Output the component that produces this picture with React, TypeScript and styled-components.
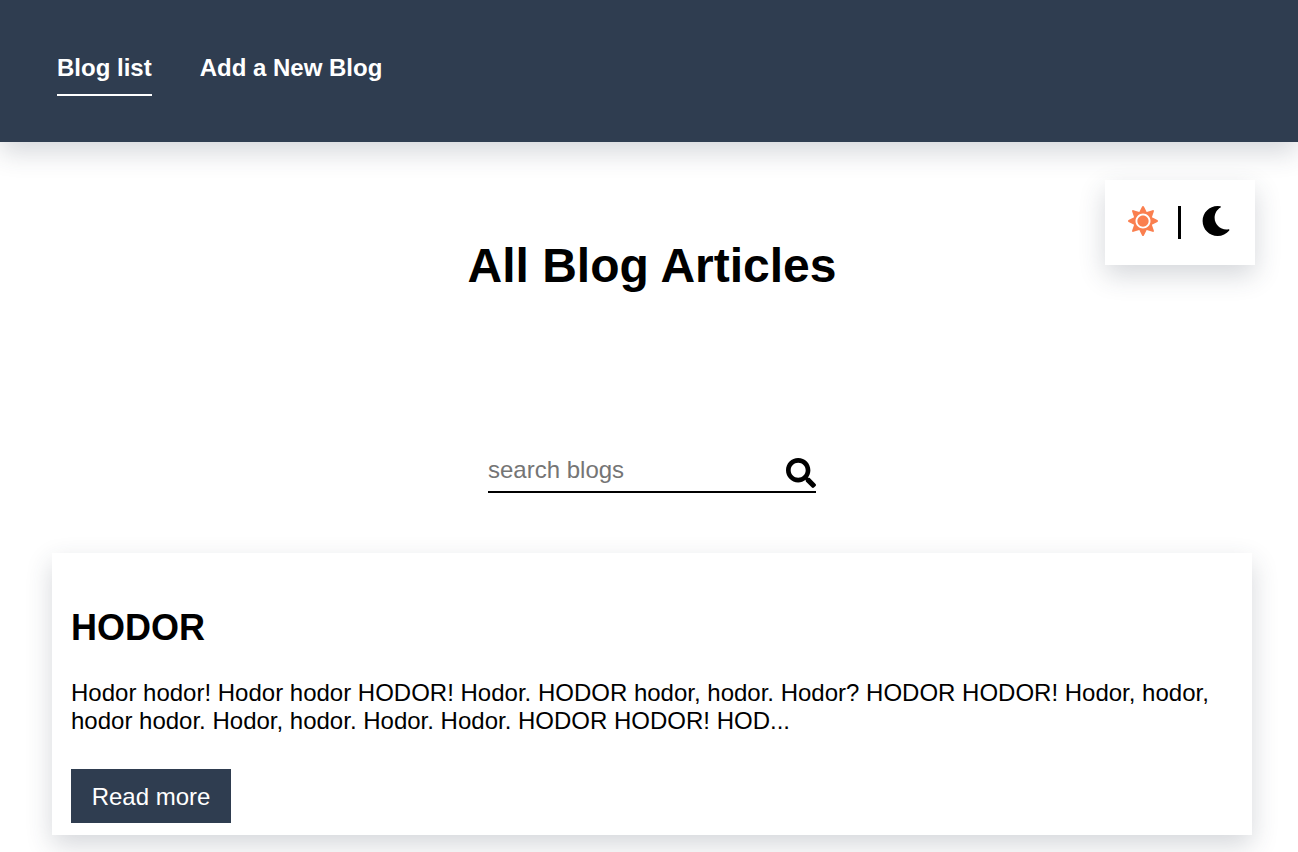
import React from "react";
import styled, { createGlobalStyle } from "styled-components";
import { FaMoon, FaSearch, FaSun } from "react-icons/fa";

const navy = "#2f3d50";
const shadow = "0 10px 25px rgba(47, 56, 76, 0.2)";

const GlobalStyle = createGlobalStyle`
  * { box-sizing: border-box; }
  body {
    margin: 0;
    background: #fff;
    color: #000;
    font: 24px/28px "Liberation Sans", Arial, sans-serif;
  }
  h1, h2, p { margin: 0; }
  button, input { font: inherit; }
`;

const Header = styled.header`
  background: ${navy};
  padding: 54px 57px 46px;
  box-shadow: ${shadow};
`;

const Nav = styled.nav`
  display: flex;
  flex-wrap: wrap;
  gap: 48px;
`;

const NavLink = styled.a<{ $active?: boolean }>`
  color: #fff;
  font-weight: bold;
  text-decoration: none;
  padding-bottom: 12px;
  border-bottom: 2px solid ${(p) => (p.$active ? "#fff" : "transparent")};
`;

const ThemeSwitch = styled.div`
  position: absolute;
  top: 180px;
  right: 43px;
  display: flex;
  align-items: flex-start;
  gap: 20px;
  padding: 26px 24px 26px 23px;
  background: #fff;
  box-shadow: ${shadow};
`;

const IconButton = styled.button<{ $color?: string }>`
  display: flex;
  padding: 0;
  border: 0;
  background: none;
  color: ${(p) => p.$color || "#000"};
  cursor: pointer;
`;

const Divider = styled.span`
  width: 3px;
  height: 33px;
  background: #000;
`;

const Main = styled.main`
  display: flex;
  flex-direction: column;
  align-items: center;
  padding: 96px 46px 48px 52px;
`;

const Title = styled.h1`
  font-size: 48px;
  line-height: 56px;
  text-align: center;
`;

const Search = styled.form`
  display: flex;
  align-items: flex-end;
  width: 328px;
  max-width: 100%;
  margin: 162px 0 60px;
  padding-bottom: 3px;
  border-bottom: 2px solid #000;
`;

const SearchInput = styled.input`
  flex: 1;
  min-width: 0;
  height: 32px;
  padding: 0 0 4px;
  border: 0;
  outline: 0;
  background: none;
  &::placeholder { color: #757575; }
`;

const Card = styled.article`
  width: 100%;
  max-width: 1200px;
  padding: 54px 19px 12px;
  background: #fff;
  box-shadow: ${shadow};
`;

const CardTitle = styled.h2`
  font-size: 36px;
  line-height: 42px;
  margin-bottom: 30px;
`;

const ReadMore = styled.button`
  display: block;
  min-width: 160px;
  margin-top: 34px;
  padding: 14px 20px 12px;
  border: 0;
  background: ${navy};
  color: #fff;
  cursor: pointer;
`;

export default function App() {
  return (
    <>
      <GlobalStyle />
      <Header>
        <Nav>
          <NavLink href="#blogs" $active>Blog list</NavLink>
          <NavLink href="#new">Add a New Blog</NavLink>
        </Nav>
      </Header>
      <ThemeSwitch>
        <IconButton aria-label="Light theme" $color="#fa7f4f"><FaSun size={30} /></IconButton>
        <Divider />
        <IconButton aria-label="Dark theme"><FaMoon size={30} /></IconButton>
      </ThemeSwitch>
      <Main>
        <Title>All Blog Articles</Title>
        <Search onSubmit={(e) => e.preventDefault()}>
          <SearchInput type="text" aria-label="search blogs" placeholder="search blogs" />
          <IconButton aria-label="Search"><FaSearch size={30} /></IconButton>
        </Search>
        <Card>
          <CardTitle>HODOR</CardTitle>
          <p>
            Hodor hodor! Hodor hodor HODOR! Hodor. HODOR hodor, hodor. Hodor? HODOR HODOR!
            Hodor, hodor, hodor hodor. Hodor, hodor. Hodor. Hodor. HODOR HODOR! HOD...
          </p>
          <ReadMore>Read more</ReadMore>
        </Card>
      </Main>
    </>
  );
}
